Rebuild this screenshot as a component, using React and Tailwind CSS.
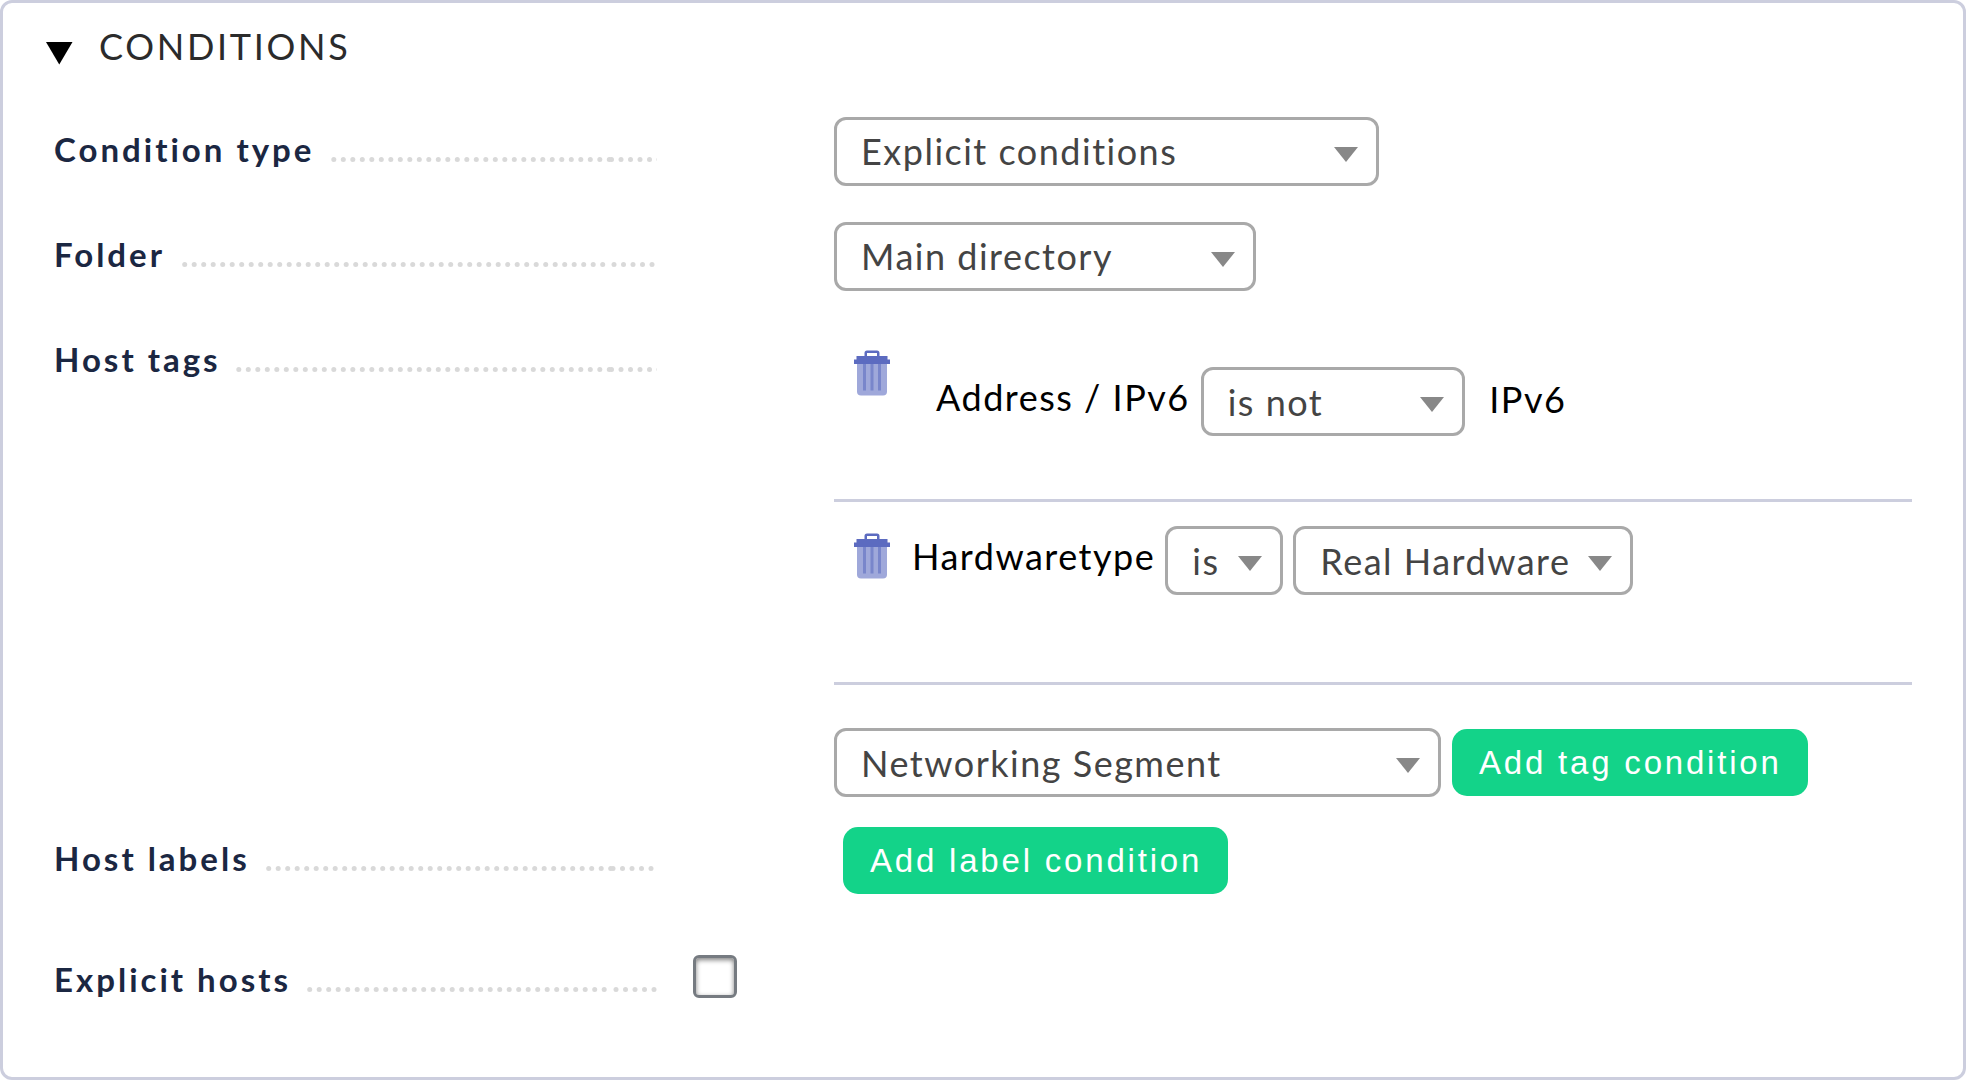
import React from "react";

const PITCH = 9.5;
const FIRST_RUN_END = 611.5;

function Leader({ from, seam, end }) {
  const xs = [];
  for (let x = from; x < FIRST_RUN_END; x += PITCH) xs.push(x);
  for (let x = seam; x < end; x += PITCH) xs.push(x);
  const left = Math.floor(from) - 3;
  return (
    <svg className="absolute top-[27px] h-[6px]" style={{ left: left - 54, width: 657 - left }} aria-hidden="true">
      {xs.map((x) => (
        <circle key={x} cx={x - left} cy="3.5" r="2.5" fill="#d9d9d9" />
      ))}
    </svg>
  );
}

function Label({ children, from, seam, end }) {
  return (
    <div className="relative mt-[12px] h-[40px] w-[603px] shrink-0 text-[33px] leading-[40px] font-bold tracking-[3px] text-[#1b2742]">
      <span>{children}</span>
      <Leader from={from} seam={seam} end={end} />
    </div>
  );
}

function Select({ children, className, textClassName = "" }) {
  return (
    <div className={"flex h-[69px] shrink-0 items-center justify-between rounded-[12px] border-[3px] border-[#a9a9a9] bg-white pr-[18px] pl-[24px] text-[#444] " + className}>
      <span className={textClassName}>{children}</span>
      <svg width="24" height="15" viewBox="0 0 24 15" className="mt-[5px] shrink-0" aria-hidden="true">
        <path d="M0 0H24L12 15Z" fill="#888" />
      </svg>
    </div>
  );
}

function Button({ children, className }) {
  return (
    <button className={"h-[67px] shrink-0 rounded-[15px] bg-[#13d389] pl-[27px] text-left font-['Liberation_Sans',sans-serif] text-[33px] leading-[67px] tracking-[2.8px] text-white " + className}>
      {children}
    </button>
  );
}

function Trash() {
  return (
    <svg width="36" height="46" viewBox="0 0 36 46" className="shrink-0" aria-hidden="true">
      <path d="M3 12H33V41.500Q33 45.500 29 45.500H7Q3 45.500 3 41.500Z" fill="#9fa8da" />
      <path d="M10.500 14V40.500M18 14V40.500M25.500 14V40.500" stroke="#7986cb" strokeWidth="3" />
      <path d="M0 9.500H2.500V6H10.500V3Q10.500 .5 13 .5H23Q25.500 .5 25.500 3V6H33.500V9.500H36V14H0ZM13 3V6H23V3Z" fill="#5c6bc0" fillRule="evenodd" />
    </svg>
  );
}

export default function App() {
  return (
    <main className="h-[1080px] w-[1966px] overflow-hidden bg-white">
      <section className="h-[1080px] rounded-[12px] border-[3px] border-[#cccede] font-['Lato',sans-serif] text-[36px] leading-[43px] tracking-[1.5px] whitespace-nowrap text-black">
        <header className="flex h-[114px] pt-[22px] pl-[43px]">
          <svg width="27" height="23" viewBox="0 0 27 23" className="mt-[17px] shrink-0" aria-hidden="true">
            <path d="M0 0H26.500L13.250 22.500Z" fill="#000" />
          </svg>
          <h2 className="ml-[26px] tracking-[2.7px] text-[#2b2b2b]">CONDITIONS</h2>
        </header>

        <div className="flex h-[105px] pl-[51px]">
          <Label from={333.8} seam={611.5} end={660}>Condition type</Label>
          <div className="pl-[177px]">
            <Select className="w-[545px]">Explicit conditions</Select>
          </div>
        </div>

        <div className="flex h-[105px] pl-[51px]">
          <Label from={184.7} seam={614} end={655}>Folder</Label>
          <div className="pl-[177px]">
            <Select className="w-[422px]">Main directory</Select>
          </div>
        </div>

        <div className="flex h-[499px] pl-[51px]">
          <Label from={238.8} seam={611.5} end={660}>Host tags</Label>
          <div className="ml-[177px] w-[1078px]">
            <div className="flex h-[175px] border-b-[3px] border-[#cccede] pt-[23px] pl-[20px]">
              <Trash />
              <span className="mt-[26px] ml-[46px]">Address / IPv6</span>
              <Select className="mt-[17px] ml-[11px] w-[264px]" textClassName="pt-[2px]">is not</Select>
              <span className="mt-[28px] ml-[24.5px]">IPv6</span>
            </div>
            <div className="flex h-[183px] border-b-[3px] border-[#cccede] pt-[24px] pl-[20px]">
              <div className="pt-[7px]">
                <Trash />
              </div>
              <span className="mt-[9px] ml-[22px]">Hardwaretype</span>
              <Select className="ml-[10px] w-[118px]" textClassName="pt-[2px]">is</Select>
              <Select className="ml-[10px] w-[340px]" textClassName="pt-[2px]">Real Hardware</Select>
            </div>
            <div className="flex pt-[43px]">
              <Select className="w-[607px]" textClassName="pt-[2px]">Networking Segment</Select>
              <Button className="mt-px ml-[11px] w-[356px]">Add tag condition</Button>
            </div>
          </div>
        </div>

        <div className="flex h-[121px] pl-[51px]">
          <Label from={268.7} seam={613} end={655}>Host labels</Label>
          <Button className="mt-px ml-[186px] w-[385px]">Add label condition</Button>
        </div>

        <div className="flex pl-[51px]">
          <Label from={309.7} seam={616} end={655}>Explicit hosts</Label>
          <div role="checkbox" aria-checked="false" className="mt-[8px] ml-[36px] h-[43px] w-[44px] shrink-0 rounded-[6px] border-[3px] border-[#767b81] bg-white shadow-[inset_0_2px_5px_rgba(0,0,0,0.5)]" />
        </div>
      </section>
    </main>
  );
}
